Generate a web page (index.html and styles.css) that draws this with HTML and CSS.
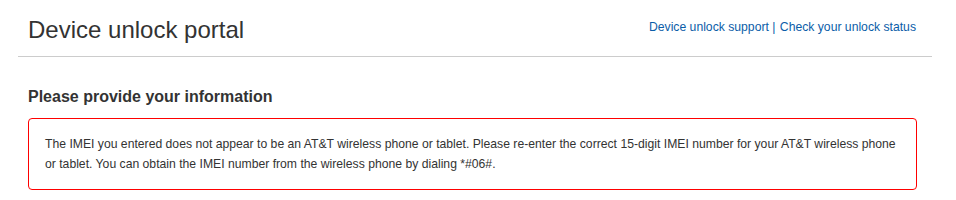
FILE: index.html
```html
<!DOCTYPE html>
<html>
    <head>
        <meta charset="UTF-8">
        <title>Device unlock portal</title>
        <link rel="stylesheet" href="styles.css">
    </head>
    <body>
        <div class="page">
            <div class="header">
                <h1 class="title">Device unlock portal</h1>
                <div class="headerLinks">
                    <a href="#">Device unlock support</a> <span class="sep">|</span>
                    <a href="#">Check your unlock status</a>
                </div>
            </div>

            <div class="content">
                <h2 class="sectionTitle">Please provide your information</h2>
                <div class="errorBox">
                    The IMEI you entered does not appear to be an AT&amp;T wireless phone or tablet. Please re-enter the correct 15-digit IMEI number for your AT&amp;T wireless phone or tablet. You can obtain the IMEI number from the wireless phone by dialing *#06#.
                </div>
            </div>
        </div>
    </body>
</html>
```

FILE: styles.css
```css
html, body {
    margin: 0px;
    padding: 0px;
    background-color: #fff;
    font-family: "Liberation Sans", Arial, Helvetica, sans-serif;
    color: #333;
}

.page {
    margin: 0px 24px 0px 18px;
}

.header {
    display: flex;
    justify-content: space-between;
    align-items: flex-start;
    height: 56px;
    padding: 0px 16px 0px 10px;
    border-bottom: 1px solid #cccccc;
}

.title {
    margin: 16px 0px 0px 0px;
    font-size: 24px;
    line-height: 28px;
    font-weight: normal;
    color: #333;
}

.headerLinks {
    margin-top: 19px;
    font-size: 12.2px;
    line-height: 16px;
    color: #0b5da8;
}

.headerLinks a {
    color: #0b5da8;
    text-decoration: none;
}

.sep {
    margin-right: 1px;
}

.content {
    padding: 0px 15px 0px 10px;
}

.sectionTitle {
    margin: 30px 0px 11px 0px;
    font-size: 16px;
    line-height: 20px;
    font-weight: bold;
    color: #333;
}

.errorBox {
    border: 1px solid #ff0000;
    border-radius: 4px;
    padding: 15px 16px;
    font-size: 12.2px;
    line-height: 20px;
    color: #333;
}
```
